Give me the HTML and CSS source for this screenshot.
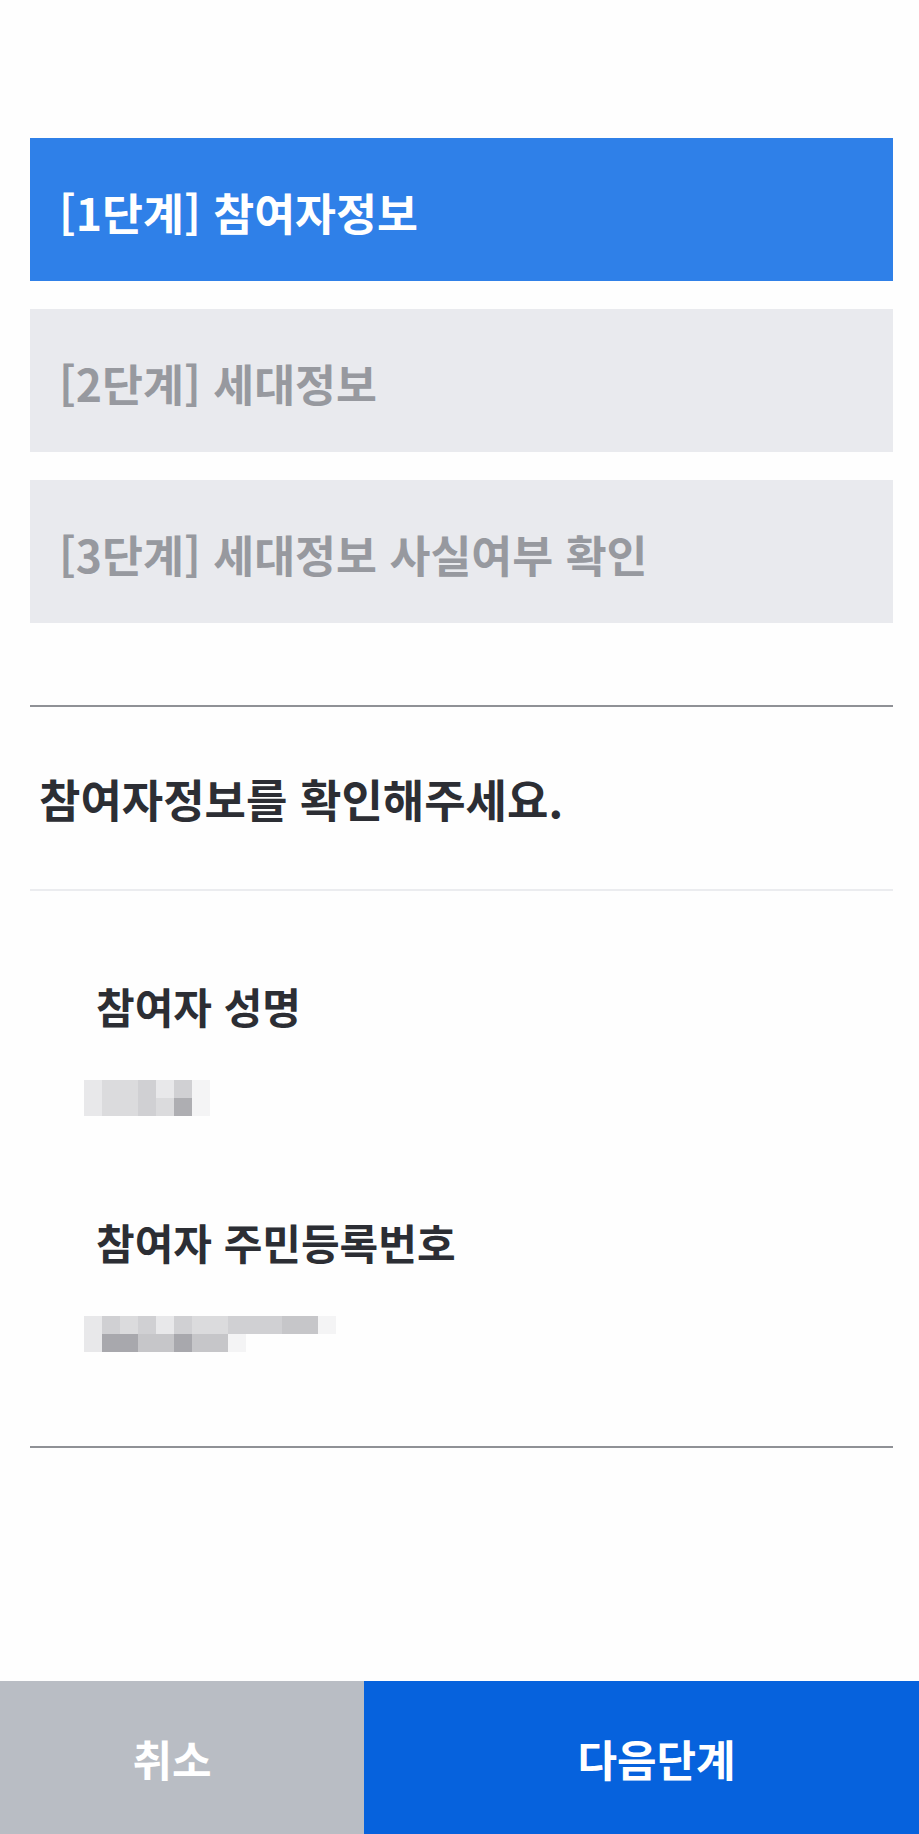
FILE: index.html
```html
<!DOCTYPE html>
<html lang="ko">
  <head>
    <meta charset="UTF-8" />
    <title>참여자정보 확인</title>
    <link rel="stylesheet" href="styles.css">
  </head>
  <body>
    <div class="page">
      <div class="content">
        <div class="steps">
          <div class="step active">[1단계] 참여자정보</div>
          <div class="step">[2단계] 세대정보</div>
          <div class="step">[3단계] 세대정보 사실여부 확인</div>
        </div>

        <div class="divider"></div>
        <h2 class="heading">참여자정보를 확인해주세요.</h2>
        <div class="divider light"></div>

        <div class="info">
          <div class="item">
            <div class="label">참여자 성명</div>
            <div class="masked">
              <div class="row">
                <i class="s1"></i><i class="s2"></i><i class="s2"></i><i class="s3"></i><i class="s1"></i><i class="s3"></i><i class="s0"></i>
              </div>
              <div class="row">
                <i class="s1"></i><i class="s2"></i><i class="s2"></i><i class="s3"></i><i class="s2"></i><i class="s5"></i><i class="s0"></i>
              </div>
            </div>
          </div>
          <div class="item">
            <div class="label">참여자 주민등록번호</div>
            <div class="masked">
              <div class="row">
                <i class="s1"></i><i class="s3"></i><i class="s2"></i><i class="s3"></i><i class="s1"></i><i class="s3"></i><i class="s2"></i>
                <i class="s2"></i><i class="s3"></i><i class="s3"></i><i class="s3"></i><i class="s4"></i><i class="s4"></i><i class="s0"></i>
              </div>
              <div class="row">
                <i class="s1"></i><i class="s6"></i><i class="s6"></i><i class="s4"></i><i class="s4"></i><i class="s6"></i><i class="s4"></i>
                <i class="s4"></i><i class="s0"></i>
              </div>
            </div>
          </div>
        </div>

        <div class="divider"></div>
      </div>

      <div class="actions">
        <button class="btn cancel">취소</button>
        <button class="btn next">다음단계</button>
      </div>
    </div>
  </body>
</html>
```

FILE: styles.css
```css
html,
body {
  margin: 0;
  padding: 0;
  background: #fefefe;
}
body {
  font-family: 'Noto Sans CJK KR', 'Noto Sans', sans-serif;
  -webkit-font-smoothing: antialiased;
}
.page {
  display: flex;
  flex-direction: column;
  min-height: 100vh;
}
.content {
  flex: 1;
  padding: 138px 26px 0 30px;
}

.steps {
  display: flex;
  flex-direction: column;
  gap: 28px;
}
.step {
  display: flex;
  align-items: center;
  height: 143px;
  padding: 3px 0 0 29px;
  box-sizing: border-box;
  font-size: 44.5px;
  font-weight: 700;
  color: #97999f;
  background-color: #e9eaee;
}
.step.active {
  color: #ffffff;
  background-color: #2f80e8;
}

.divider {
  height: 2px;
  background-color: #8f9196;
}
.steps + .divider {
  margin-top: 82px;
}
.divider.light {
  background-color: #ebecef;
}

.heading {
  display: flex;
  align-items: center;
  height: 182px;
  margin: 0;
  padding-left: 9px;
  font-size: 45px;
  font-weight: 700;
  color: #2c2e34;
}

.info {
  padding: 92px 0 94px 0;
}
.item + .item {
  margin-top: 103px;
}
.label {
  padding-left: 66px;
  font-size: 42px;
  line-height: 46px;
  font-weight: 700;
  color: #2c2e34;
}
.masked {
  margin: 51px 0 0 54px;
}
.row {
  display: flex;
}
.row i {
  width: 18px;
  height: 18px;
}
.s0 { background-color: #f4f4f5; }
.s1 { background-color: #e8e8ea; }
.s2 { background-color: #dbdbdd; }
.s3 { background-color: #d0d0d3; }
.s4 { background-color: #c6c6c9; }
.s5 { background-color: #aeaeb2; }
.s6 { background-color: #a8a8ad; }

.actions {
  display: flex;
  height: 153px;
}
.btn {
  display: flex;
  align-items: center;
  justify-content: center;
  border: 0;
  margin: 0;
  font-family: inherit;
  font-size: 43px;
  font-weight: 700;
  color: #ffffff;
}
.cancel {
  width: 364px;
  padding: 0 20px 0 0;
  background-color: #b9bdc4;
}
.next {
  flex: 1;
  padding: 0 0 0 30px;
  background-color: #0662dd;
}
```
